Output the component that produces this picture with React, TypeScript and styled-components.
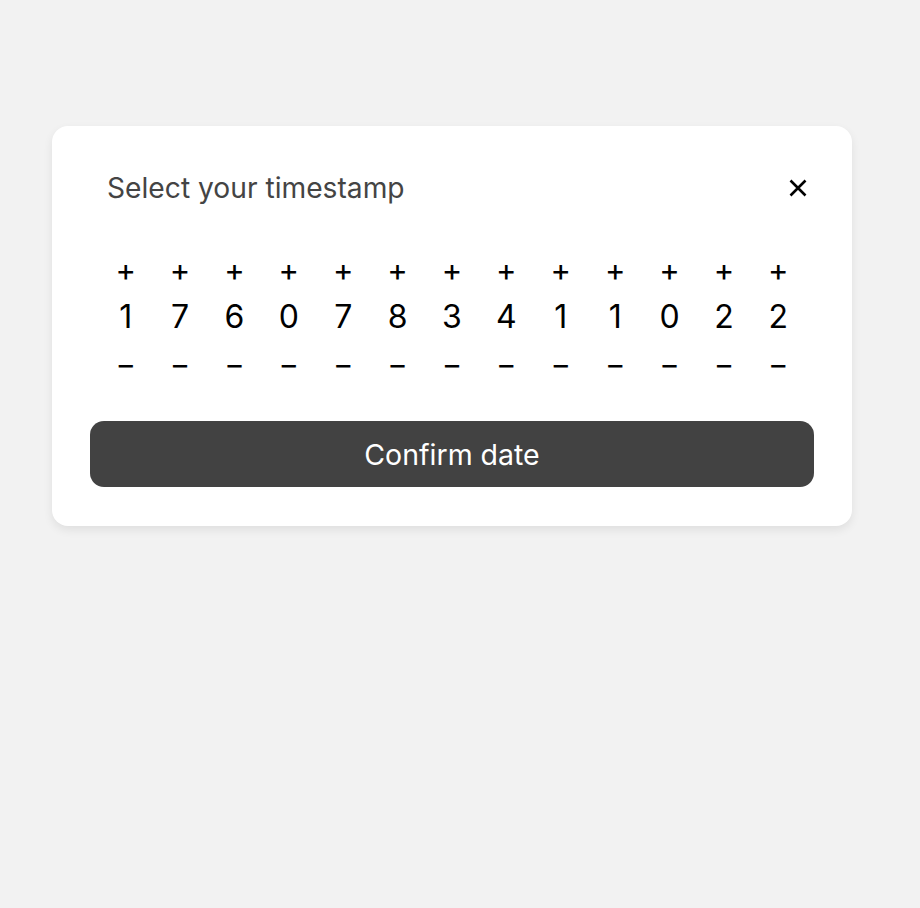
import React, { useState } from "react";
import styled, { createGlobalStyle } from "styled-components";

const GlobalStyle = createGlobalStyle`
  html, body {
    margin: 0;
    padding: 0;
    background: #f2f2f2;
    font-family: Inter, "Noto Sans", sans-serif;
  }
`;

const Page = styled.div`
  min-height: 908px;
  padding: 126px 0 0 52px;
  box-sizing: border-box;
`;

const Card = styled.div`
  width: 800px;
  height: 400px;
  box-sizing: border-box;
  background: #ffffff;
  border-radius: 16px;
  box-shadow: 0 4px 10px rgba(0, 0, 0, 0.08);
  padding: 40px 38px 0 38px;
  display: flex;
  flex-direction: column;
`;

const Header = styled.div`
  display: flex;
  align-items: center;
  justify-content: space-between;
  padding: 0 7px 0 17px;
  height: 44px;
`;

const Title = styled.h2`
  margin: 0;
  font-size: 28.2px;
  font-weight: 400;
  color: #444444;
`;

const CloseButton = styled.button`
  border: none;
  background: none;
  padding: 0;
  width: 18px;
  height: 18px;
  display: flex;
  cursor: pointer;
`;

const Digits = styled.div`
  display: flex;
  justify-content: center;
  margin-top: 36px;
`;

const Column = styled.div`
  width: 54.4px;
  display: flex;
  flex-direction: column;
  align-items: center;
`;

const Step = styled.button`
  border: none;
  background: none;
  padding: 0;
  height: 47px;
  width: 40px;
  font-family: Inter, sans-serif;
  font-size: 31px;
  line-height: 47px;
  color: #000000;
  cursor: pointer;
`;

const Digit = styled.span`
  font-size: 32px;
  line-height: 47px;
  color: #000000;
`;

const Confirm = styled.button`
  margin-top: 34px;
  height: 66px;
  width: 100%;
  border: none;
  border-radius: 14px;
  background: #424242;
  color: #ffffff;
  font-family: Inter, sans-serif;
  font-size: 28.5px;
  cursor: pointer;
`;

const App: React.FC = () => {
  const [digits, setDigits] = useState("1760783411022".split("").map(Number));

  const bump = (i: number, d: number) =>
    setDigits((ds) => ds.map((v, j) => (j === i ? (v + d + 10) % 10 : v)));

  return (
    <Page>
      <GlobalStyle />
      <Card>
        <Header>
          <Title>Select your timestamp</Title>
          <CloseButton aria-label="Close">
            <svg width="18" height="18" viewBox="0 0 18 18">
              <path d="M1.5 1.5L16.5 16.5M16.5 1.5L1.5 16.5" stroke="#000" strokeWidth="2.6" strokeLinecap="butt" />
            </svg>
          </CloseButton>
        </Header>
        <Digits>
          {digits.map((v, i) => (
            <Column key={i}>
              <Step onClick={() => bump(i, 1)}>+</Step>
              <Digit>{v}</Digit>
              <Step onClick={() => bump(i, -1)}>−</Step>
            </Column>
          ))}
        </Digits>
        <Confirm>Confirm date</Confirm>
      </Card>
    </Page>
  );
};

export default App;
